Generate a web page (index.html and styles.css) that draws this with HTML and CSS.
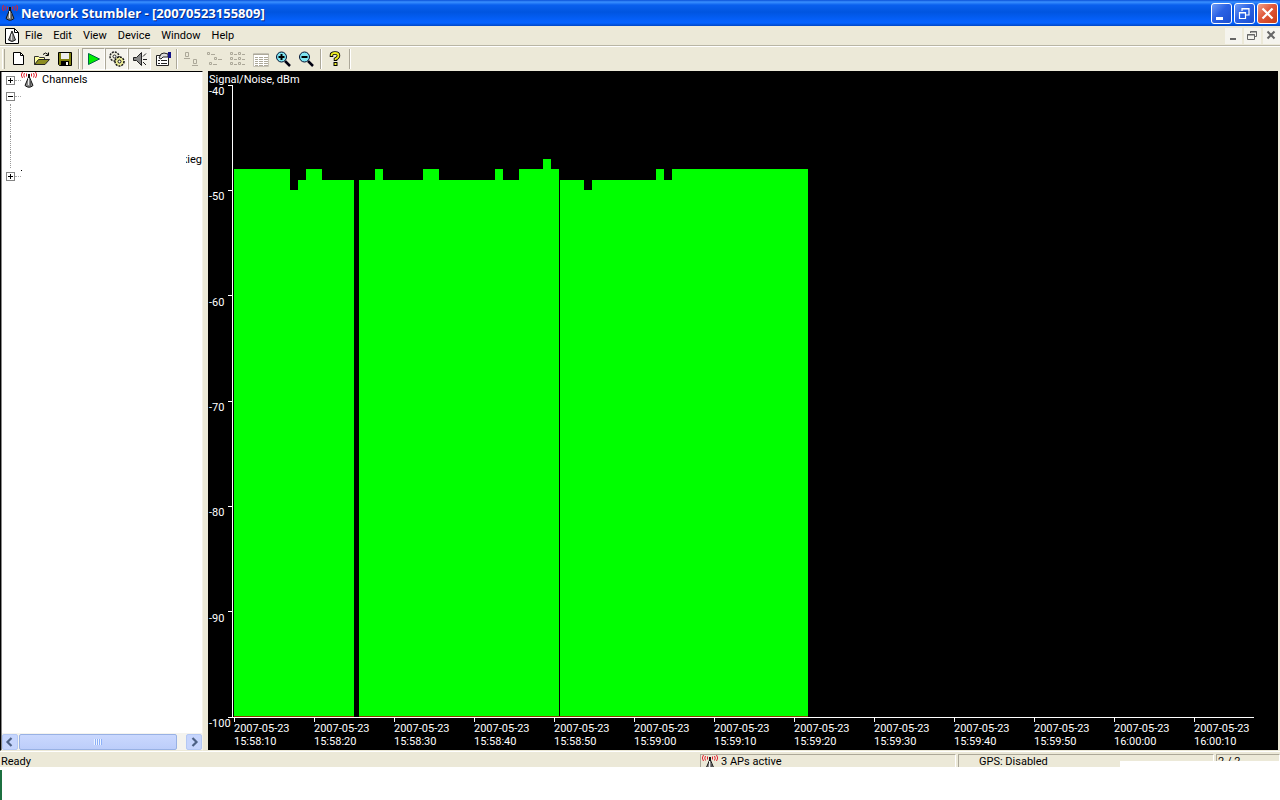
FILE: index.html
```html
<!DOCTYPE html>
<html lang="en">
<head>
<meta charset="utf-8">
<title>Network Stumbler</title>
<link rel="stylesheet" href="styles.css">
</head>
<body>
<svg class="defs" aria-hidden="true">
  <symbol id="antenna" viewBox="0 0 16 16">
    <path d="M8 4L12 13.500Q8 17 4 13.500Z" fill="#888" stroke="#111"/>
    <path d="M7.500 6v7" stroke="#eee"/>
    <path d="M9.500 8v6" stroke="#555"/>
    <path d="M8 2v4" stroke="#111" stroke-width="2"/>
    <path d="M1.500 0Q-1 3 1.500 6M3.500 1Q2 3 3.500 5.500M5.500 1.500v3M14.500 0Q17 3 14.500 6M12.500 1Q14 3 12.500 5.500M10.500 1.500v3" fill="none" stroke="#e0202c"/>
  </symbol>
</svg>
<div class="app">
  <header class="titlebar">
    <svg class="icon"><use href="#antenna"/></svg>
    <h1 class="title">Network Stumbler - [20070523155809]</h1>
    <div class="captions">
      <button class="caption" aria-label="Minimize"><svg viewBox="0 0 19 19"><path d="M4 13h7v3H4z" fill="#fff"/></svg></button>
      <button class="caption" aria-label="Restore"><svg viewBox="0 0 19 19"><path d="M7 7V4.500h7V11h-3M7 5h7M4.500 8.500h6v6h-6zM4 9h7" fill="none" stroke="#fff" stroke-width="1.200"/></svg></button>
      <button class="caption close" aria-label="Close"><svg viewBox="0 0 19 19"><path d="M4.500 4.500l10 10M14.500 4.500l-10 10" stroke="#fff" stroke-width="2.200"/></svg></button>
    </div>
  </header>
  <nav class="menubar">
    <svg class="docicon" viewBox="0 0 14 16"><path d="M.5.5h9l4 4v11H.5z" fill="#fff" stroke="#000"/><path d="M9.500.5v4h4" fill="none" stroke="#000"/><path d="M7 3l3.500 9Q7 15 3.500 12z" fill="#888" stroke="#222"/><path d="M6.500 6v6" stroke="#ddd"/></svg>
    <button>File</button><button>Edit</button><button>View</button><button>Device</button><button>Window</button><button>Help</button>
    <div class="mdi">
      <button aria-label="Minimize document"><svg viewBox="0 0 16 16"><path d="M5 10h6v2H5z" fill="#666"/></svg></button>
      <button aria-label="Restore document"><svg viewBox="0 0 16 16"><path d="M6.500 5V3.500h6v5H11M6 4h7M3.500 6.500h7v5h-7zM3 7h8" fill="none" stroke="#666"/></svg></button>
      <button aria-label="Close document"><svg viewBox="0 0 16 16"><path d="M4.500 3.500l7 7M11.500 3.500l-7 7" stroke="#666" stroke-width="2"/></svg></button>
    </div>
  </nav>
  <div class="toolbar">
    <span class="grip"></span>
    <button class="tool" aria-label="New"><svg viewBox="0 0 16 16"><path d="M2.500 1.500h7l3 3v9h-10z" fill="#fff" stroke="#000"/><path d="M9.500 1.500v3h3" fill="none" stroke="#000"/></svg></button>
    <button class="tool" aria-label="Open"><svg viewBox="0 0 16 16"><path d="M.5 13.500v-8h4l1 1h5v2" fill="#ffffa0" stroke="#333"/><path d="M.5 13.500l4-5h11l-4.500 5z" fill="#8c8c20" stroke="#222"/><path d="M9 3.500q2.500-3 5 0m.5-2v3h-3" fill="none" stroke="#000"/></svg></button>
    <button class="tool" aria-label="Save"><svg viewBox="0 0 16 16"><path d="M1.500 1.500h13v13h-12l-1-1z" fill="#808010" stroke="#000"/><path d="M4 2h8v6H4z" fill="#eee"/><path d="M4 10h8v4H4z" fill="#000"/><path d="M9 11h2v3H9z" fill="#fff"/></svg></button>
    <span class="sep"></span>
    <button class="tool on" aria-label="Scan"><svg viewBox="0 0 16 16"><path d="M2.500 2.500v11l11-5.500z" fill="#0e0" stroke="#064"/></svg></button>
    <button class="tool on" aria-label="Auto configure"><svg viewBox="0 0 16 16"><circle cx="5.500" cy="5.500" r="4.500" fill="#eed" stroke="#222" stroke-width="1.500" stroke-dasharray="2 1"/><circle cx="5.500" cy="5.500" r="1.500" fill="#fff" stroke="#222"/><circle cx="10.500" cy="10.500" r="4.500" fill="#ee9" stroke="#111" stroke-width="1.500" stroke-dasharray="2 1"/><circle cx="10.500" cy="10.500" r="1.500" fill="#fff" stroke="#111"/></svg></button>
    <button class="tool on" aria-label="Sound"><svg viewBox="0 0 16 16"><path d="M1.500 6.500h3l5-5v13l-5-5h-3z" fill="#888" stroke="#222"/><path d="M11 5.500l3-3M11 8.500h4M11 11l3 3" stroke="#222"/></svg></button>
    <button class="tool" aria-label="Options"><svg viewBox="0 0 16 16"><path d="M1.500 4.500h12v10h-12z" fill="#fff" stroke="#222"/><path d="M3 9.500h2M6 9.500h6M3 12.500h2M6 12.500h6" stroke="#222"/><path d="M4 7l2-4 3-1 4 1v3H8L6 8z" fill="#ddd" stroke="#222"/><path d="M13 1h3v6h-3z" fill="#118"/></svg></button>
    <span class="sep"></span>
    <button class="tool" disabled aria-label="Large icons"><svg viewBox="0 0 16 16"><path d="M1.500 1.500h3v4h-3zM9.500 8.500h3v4h-3zM0 7.500h6M8 14.500h6" fill="none" stroke="#aca899"/></svg></button>
    <button class="tool" disabled aria-label="Small icons"><svg viewBox="0 0 16 16"><path d="M.5 1.500h2v2h-2zM4 3.500h4M7.500 6.500h2v2h-2zM11 8.500h4M2.500 11.500h2v2h-2zM6 13.500h4" fill="none" stroke="#aca899"/></svg></button>
    <button class="tool" disabled aria-label="List"><svg viewBox="0 0 16 16"><path d="M.5 1.500h2v2h-2zM4 3.500h3M8.500 1.500h2v2h-2zM12 3.500h3M.5 6.500h2v2h-2zM4 8.500h3M8.500 6.500h2v2h-2zM12 8.500h3M.5 11.500h2v2h-2zM4 13.500h3M8.500 11.500h2v2h-2zM12 13.500h3" fill="none" stroke="#aca899"/></svg></button>
    <button class="tool" disabled aria-label="Details"><svg viewBox="0 0 16 16"><path d="M.5 2.500h15v13H.5z" fill="#fff" stroke="#c5c2b5"/><path d="M0 3.500h16M2 6.500h3M6 6.500h4M11 6.500h4M2 8.500h3M6 8.500h4M11 8.500h4M2 10.500h3M6 10.500h4M11 10.500h4M2 12.500h3M6 12.500h4M11 12.500h4M2 14.500h3M6 14.500h4M11 14.500h4" stroke="#aca899"/></svg></button>
    <button class="tool" aria-label="Zoom in"><svg viewBox="0 0 16 16"><path d="M9 10l5 5" stroke="#001" stroke-width="2.500"/><circle cx="5.500" cy="6" r="5" fill="#7ee4f0" stroke="#013"/><path d="M2.500 6h6M5.500 3v6" stroke="#000" stroke-width="2"/></svg></button>
    <button class="tool" aria-label="Zoom out"><svg viewBox="0 0 16 16"><path d="M9 10l5 5" stroke="#001" stroke-width="2.500"/><circle cx="5.500" cy="6" r="5" fill="#7ee4f0" stroke="#013"/><path d="M2.500 6h6" stroke="#000" stroke-width="2"/></svg></button>
    <span class="sep"></span>
    <button class="tool" aria-label="Help"><svg viewBox="0 0 16 16"><path d="M3.500 6V4q0-2 3.500-2t3.500 2.500q0 2-3 3.500v2" fill="none" stroke="#000" stroke-width="3.500"/><path d="M5.500 11h4v4h-4z" fill="#000"/><path d="M3.500 5V4q0-2 3.500-2t3.500 2.500q0 2-3 3.500v1" fill="none" stroke="#ee2" stroke-width="1.800"/><path d="M6.500 12h2v2h-2z" fill="#ee2"/></svg></button>
    <span class="sep"></span>
  </div>
  <main class="work">
    <aside class="side">
      <ul class="tree">
        <li><button class="box" aria-label="Expand Channels"><svg viewBox="0 0 9 9"><path d="M2 4.500h5M4.500 2v5" stroke="#000"/></svg></button><span class="stub"></span><svg class="icon"><use href="#antenna"/></svg><span class="name">Channels</span></li>
        <li><button class="box" aria-label="Collapse"><svg viewBox="0 0 9 9"><path d="M2 4.500h5" stroke="#000"/></svg></button><span class="stub"></span></li>
        <li class="line"></li>
        <li class="line"></li>
        <li class="line"></li>
        <li class="line"><span class="cut"><span>kieg</span></span></li>
        <li><button class="box" aria-label="Expand"><svg viewBox="0 0 9 9"><path d="M2 4.500h5M4.500 2v5" stroke="#000"/></svg></button><span class="stub"></span><span class="speck"></span></li>
      </ul>
      <div class="scroll">
        <button aria-label="Scroll left"><svg viewBox="0 0 16 16"><path d="M9.500 4l-4 4 4 4" fill="none" stroke="#4d6185" stroke-width="2.200"/></svg></button>
        <div class="track"><div class="thumb"><svg viewBox="0 0 8 6"><path d="M.5 0v6M2.500 0v6M4.500 0v6M6.500 0v6" stroke="#eef4fe"/><path d="M1.500 0v6M3.500 0v6M5.500 0v6M7.500 0v6" stroke="#8cb0f8"/></svg></div></div>
        <button aria-label="Scroll right"><svg viewBox="0 0 16 16"><path d="M6.500 4l4 4-4 4" fill="none" stroke="#4d6185" stroke-width="2.200"/></svg></button>
      </div>
    </aside>
    <section class="chart">
      <div class="heading">Signal/Noise, dBm</div>
      <div class="ylabels"><span>-40</span><span>-50</span><span>-60</span><span>-70</span><span>-80</span><span>-90</span><span>-100</span></div>
      <svg class="plot" viewBox="0 0 1026 637" preserveAspectRatio="none">
        <path fill="#0f0" d="M6 632V84H62V105H70V95H78V84H94V95H126V632ZM131 632V95H147V84H155V95H195V84H211V95H267V84H275V95H291V84H315V74H323V84H331V632ZM332 632V95H356V105H364V95H428V84H436V95H444V84H580V632Z"/>
        <path fill="#8a3a00" d="M6 631h120v1H6zM131 631h449v1H131z"/>
        <path fill="#fff" d="M4 0h1v633H4zM4 632h1022v1H4zM0 0h4v1H0zM0 105h4v1H0zM0 210h4v1H0zM0 316h4v1H0zM0 421h4v1H0zM0 526h4v1H0zM0 632h4v1H0zM6 633h1v4H6zM86 633h1v4h-1zM166 633h1v4h-1zM246 633h1v4h-1zM326 633h1v4h-1zM406 633h1v4h-1zM486 633h1v4h-1zM566 633h1v4h-1zM646 633h1v4h-1zM726 633h1v4h-1zM806 633h1v4h-1zM886 633h1v4h-1zM966 633h1v4h-1z"/>
      </svg>
      <div class="xlabels">
        <span>2007-05-23<br>15:58:10</span><span>2007-05-23<br>15:58:20</span><span>2007-05-23<br>15:58:30</span><span>2007-05-23<br>15:58:40</span><span>2007-05-23<br>15:58:50</span><span>2007-05-23<br>15:59:00</span><span>2007-05-23<br>15:59:10</span><span>2007-05-23<br>15:59:20</span><span>2007-05-23<br>15:59:30</span><span>2007-05-23<br>15:59:40</span><span>2007-05-23<br>15:59:50</span><span>2007-05-23<br>16:00:00</span><span>2007-05-23<br>16:00:10</span>
      </div>
    </section>
  </main>
  <footer class="status">
    <span class="ready">Ready</span>
    <span class="pane aps"><svg class="icon"><use href="#antenna"/></svg>3 APs active</span>
    <span class="pane gps">GPS: Disabled</span>
    <span class="pane count">2 / 2</span>
    <span class="patch"></span>
  </footer>
  <div class="below"></div>
</div>
</body>
</html>
```
FILE: styles.css
```css
* { box-sizing: border-box; }
body { margin: 0; background: #fff; color: #000; font: 11px/14px Roboto, "Liberation Sans", sans-serif; }
button { margin: 0; padding: 0; border: 0; background: none; font: inherit; color: inherit; }
svg { display: block; }
ul { list-style: none; margin: 0; padding: 0; }
.defs { position: absolute; width: 0; height: 0; }
.icon { width: 16px; height: 16px; flex: none; }
.app { display: flex; flex-direction: column; height: 100vh; overflow: hidden; }

.titlebar { display: flex; align-items: center; gap: 3px; flex: none; height: 26px; padding: 0 2px; background: linear-gradient(#0a50d8 0, #3a90ff 2px, #0a60ee 5px, #0055e0 12px, #0560fa 20px, #0563ff 23px, #0046c4 26px); }
.title { flex: 1; margin: 0; color: #fff; font: bold 13px/20px "Noto Sans", sans-serif; text-shadow: 1px 1px #0a2a80; white-space: nowrap; }
.captions { display: flex; gap: 2px; }
.caption { width: 21px; height: 21px; border: 1px solid #fff; border-radius: 3px; background: linear-gradient(135deg, #6f9cf6, #2b62e4 45%, #1c4fd0); }
.close { background: linear-gradient(135deg, #f0a088, #e0583a 45%, #c83c14); }

.menubar { display: flex; align-items: center; gap: 1px; flex: none; height: 20px; padding-left: 5px; background: #ece9d8; border-bottom: 1px solid #b8b5a5; }
.docicon { width: 14px; height: 16px; }
.menubar > button { padding: 0 5px; line-height: 18px; }
.mdi { display: flex; gap: 2px; margin-left: auto; }
.mdi button { width: 17px; height: 16px; background: #f5f4ee; }
.mdi svg { width: 16px; height: 16px; }

.toolbar { display: flex; align-items: center; flex: none; height: 24px; background: #ece9d8; border-top: 1px solid #fff; }
.grip { width: 3px; height: 20px; margin: 0 2px; border-left: 1px solid #fff; border-right: 1px solid #aca899; }
.tool { display: grid; place-items: center; width: 23px; height: 22px; }
.tool svg { width: 16px; height: 16px; }
.on { border: 1px solid; border-color: #aca899 #fff #fff #aca899; background: #f5f4ee; }
.sep { width: 2px; height: 20px; margin: 0 2px; border-left: 1px solid #aca899; border-right: 1px solid #fff; }

.work { display: flex; flex: 1; min-height: 0; padding: 1px 2px 0 0; background: #ece9d8; }
.side { display: flex; flex-direction: column; width: 203px; margin-right: 5px; background: #fff; border: solid #000; border-width: 1px 0 0 1px; box-shadow: inset 1px 0 #888; border-right: 1px solid #f4f2e8; border-bottom: 1px solid #ece9d8; }
.tree { flex: 1; padding-left: 5px; line-height: 16px; }
.tree li { display: flex; align-items: center; height: 16px; }
.box { width: 9px; height: 9px; border: 1px solid #848484; background: #fff; }
.box svg { width: 9px; height: 9px; margin: -1px; }
.stub { width: 6px; border-top: 1px dotted #aaa; }
.speck { align-self: flex-start; width: 1px; height: 1px; margin-top: 2px; background: #000; }
.name { margin-left: 5px; }
.tree .line { margin-left: 4px; border-left: 1px dotted #999; }
.cut { display: flex; justify-content: flex-end; width: 16px; margin-left: auto; overflow: hidden; }
.scroll { display: flex; align-items: flex-end; height: 17px; margin-left: 1px; background: #f4f3ee; }
.scroll button { width: 16px; height: 16px; border: 1px solid #b4c8f4; border-radius: 2px; background: #c6d5fd; }
.scroll button svg { width: 16px; height: 16px; margin: -1px; }
.track { flex: 1; padding: 0 9px 0 1px; }
.thumb { display: grid; place-items: center; height: 16px; border: 1px solid #98b1e4; border-radius: 2px; background: linear-gradient(#cad8fe, #bccdfa); }
.thumb svg { width: 8px; height: 6px; }

.chart { display: grid; flex: 1; min-width: 0; grid-template-columns: 20px 1fr; grid-template-rows: 14px 1fr 28px; margin-bottom: 1px; background: #000; color: #fff; }
.heading { grid-column: 1 / 3; padding: 2px 0 0 1px; white-space: nowrap; }
.ylabels { grid-column: 1; grid-row: 2 / 4; display: flex; flex-direction: column; justify-content: space-between; margin-bottom: 19px; padding-left: 1px; white-space: nowrap; }
.plot { grid-column: 2; grid-row: 2; width: calc(100% - 24px); height: 100%; min-height: 0; shape-rendering: crispEdges; }
.xlabels { grid-column: 2; grid-row: 3; display: grid; grid-template-columns: repeat(13, 1fr); padding: 0 4px 0 6px; line-height: 13px; white-space: nowrap; }

.status { position: relative; display: flex; flex: none; gap: 2px; height: 16px; padding-top: 2px; background: #ece9d8; border-top: 1px solid #fff; overflow: hidden; line-height: 14px; }
.ready { flex: 1; padding: 1px 0 0 1px; }
.pane { display: flex; height: 18px; border: 1px solid; border-color: #aca899 #fff #fff #aca899; }
.aps { width: 256px; padding-left: 1px; gap: 3px; }
.gps { width: 256px; padding-left: 20px; }
.count { width: 64px; padding-left: 1px; }
.patch { position: absolute; right: 0; bottom: 0; width: 160px; height: 6px; background: #fff; }
.below { flex: none; height: 33px; padding-top: 3px; }
.below::before { content: ""; display: block; width: 2px; height: 100%; background: #1c7040; }
```
